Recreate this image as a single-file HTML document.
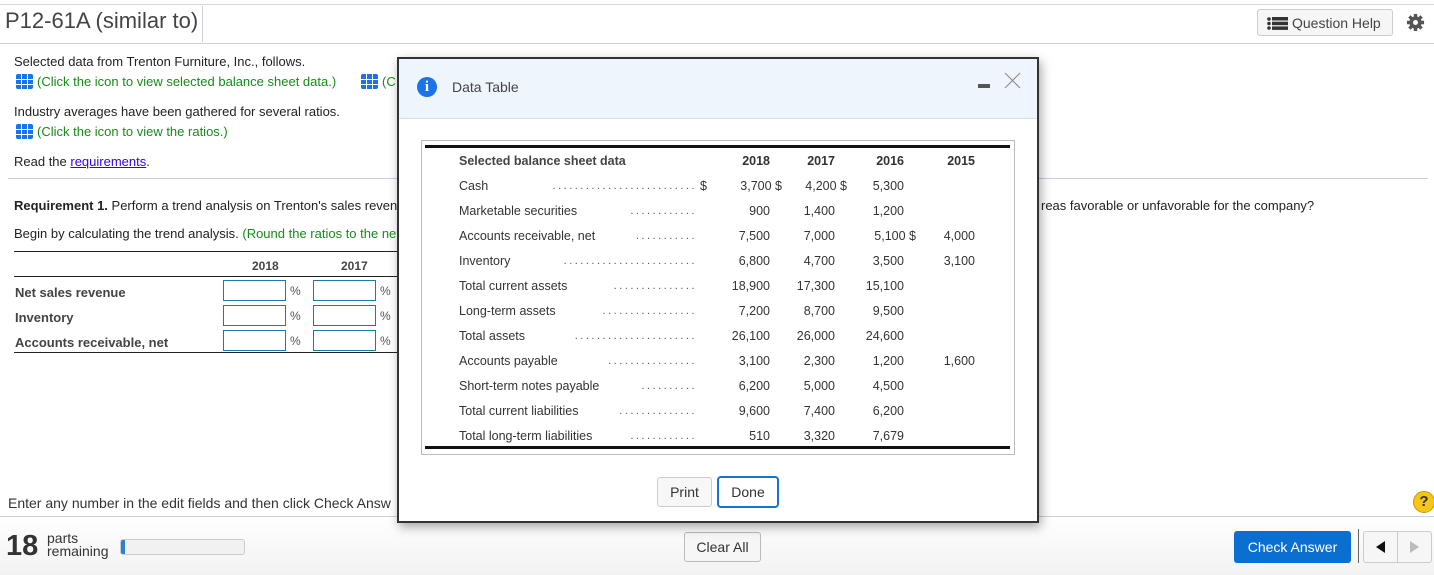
<!DOCTYPE html>
<html><head><meta charset="utf-8"><style>
*{box-sizing:border-box;margin:0;padding:0}
body{width:1434px;height:575px;position:relative;overflow:hidden;background:#fff;font-family:"Liberation Sans",Arial,sans-serif;color:#222;font-size:13px}
.a{position:absolute;white-space:nowrap}
.g{color:#1a8a1a}
.hl{position:absolute;height:1px;background:#c9d0dc}
.ic{display:inline-block;width:17px;height:15px;background:#1a73e8;vertical-align:-3px;margin-right:4px;border-radius:2px;background-image:linear-gradient(90deg,transparent 5px,#fff 5px,#fff 6px,transparent 6px,transparent 11px,#fff 11px,#fff 12px,transparent 12px),linear-gradient(0deg,transparent 4px,#fff 4px,#fff 5px,transparent 5px,transparent 9px,#fff 9px,#fff 10px,transparent 10px)}
.inp{position:absolute;width:63px;height:21px;border:1px solid #1b7aa6;background:#fff}
.pc{position:absolute;color:#555;font-size:12px}
.bl{font-weight:bold;color:#444}
.row{position:absolute;left:459px;font-size:12.5px;color:#333}
.n{position:absolute;text-align:right;font-size:12.5px;color:#333;white-space:nowrap}
.dots{position:absolute;color:#555;letter-spacing:2.5px;font-size:11px;text-align:right;overflow:hidden;white-space:nowrap;direction:rtl}
</style></head><body>
<div class="hl" style="left:0;top:4px;width:1434px;background:#d5d9e0"></div>
<div class="a" style="left:5px;top:8px;font-size:22px;color:#444">P12-61A (similar to)</div>
<div style="position:absolute;left:202px;top:6px;width:1px;height:36px;background:#c9d0dc"></div>
<div class="hl" style="left:0;top:43px;width:1434px"></div>
<div class="a" style="left:1257px;top:9px;width:136px;height:27px;border:1px solid #ccc;border-radius:3px;background:#f6f6f6;font-size:14px;color:#444;padding:5px 0 0 34px">Question Help
<svg style="position:absolute;left:9px;top:7px" width="22" height="13"><g fill="#333"><circle cx="2" cy="2" r="1.8"/><circle cx="2" cy="6.5" r="1.8"/><circle cx="2" cy="11" r="1.8"/><rect x="5" y="0" width="16" height="3.5"/><rect x="5" y="4.7" width="16" height="3.5"/><rect x="5" y="9.4" width="16" height="3.5"/></g></svg></div>
<svg style="position:absolute;left:1406px;top:13px" width="19" height="19" viewBox="0 0 20 20"><g fill="#555"><circle cx="10" cy="10" r="6.5"/><g stroke="#555" stroke-width="3.6"><line x1="10" y1="1" x2="10" y2="19"/><line x1="1" y1="10" x2="19" y2="10"/><line x1="3.6" y1="3.6" x2="16.4" y2="16.4"/><line x1="16.4" y1="3.6" x2="3.6" y2="16.4"/></g></g><circle cx="10" cy="10" r="2.6" fill="#fff"/></svg>

<div class="a" style="left:14px;top:54px">Selected data from Trenton Furniture, Inc., follows.</div>
<div class="a g" style="left:16px;top:74px"><span class="ic"></span>(Click the icon to view selected balance sheet data.)</div>
<div class="a g" style="left:361px;top:74px"><span class="ic"></span>(C</div>
<div class="a" style="left:14px;top:104px">Industry averages have been gathered for several ratios.</div>
<div class="a g" style="left:16px;top:124px"><span class="ic"></span>(Click the icon to view the ratios.)</div>
<div class="a" style="left:14px;top:154px">Read the <span style="color:#3300ee;text-decoration:underline">requirements</span>.</div>
<div class="hl" style="left:8px;top:178px;width:1420px"></div>
<div class="a" style="left:14px;top:198px"><b>Requirement 1.</b> Perform a trend analysis on Trenton's sales reven</div>
<div class="a" style="left:1041px;top:198px">reas favorable or unfavorable for the company?</div>
<div class="a" style="left:14px;top:226px">Begin by calculating the trend analysis. <span class="g">(Round the ratios to the ne</span></div>
<div style="position:absolute;left:14px;top:251px;width:385px;height:1px;background:#222"></div>
<div class="a bl" style="left:252px;top:259px;font-size:12px">2018</div>
<div class="a bl" style="left:341px;top:259px;font-size:12px">2017</div>
<div style="position:absolute;left:14px;top:276px;width:385px;height:1px;background:#222"></div>
<div class="a bl" style="left:15px;top:285px">Net sales revenue</div>
<div class="a bl" style="left:15px;top:310px">Inventory</div>
<div class="a bl" style="left:15px;top:335px">Accounts receivable, net</div>
<div class="inp" style="left:223px;top:280px"></div><div class="inp" style="left:313px;top:280px"></div>
<div class="inp" style="left:223px;top:305px"></div><div class="inp" style="left:313px;top:305px"></div>
<div class="inp" style="left:223px;top:330px"></div><div class="inp" style="left:313px;top:330px"></div>
<div class="pc" style="left:290px;top:284px">%</div><div class="pc" style="left:380px;top:284px">%</div>
<div class="pc" style="left:290px;top:309px">%</div><div class="pc" style="left:380px;top:309px">%</div>
<div class="pc" style="left:290px;top:334px">%</div><div class="pc" style="left:380px;top:334px">%</div>
<div style="position:absolute;left:14px;top:352px;width:385px;height:1px;background:#222"></div>

<div class="a" style="left:8px;top:495px;font-size:14px;color:#333">Enter any number in the edit fields and then click Check Answ</div>
<div class="hl" style="left:0;top:516px;width:1434px"></div>
<div style="position:absolute;left:0;top:517px;width:1434px;height:58px;background:linear-gradient(#fff,#f2f2f2)"></div>
<div class="a" style="left:6px;top:530px;font-size:29px;font-weight:bold;color:#333">18</div>
<div class="a" style="left:47px;top:532px;font-size:14px;color:#333;line-height:13px">parts<br>remaining</div>
<div class="a" style="left:120px;top:539px;width:125px;height:16px;border:1px solid #ccc;border-radius:3px;background:#f1f1f1;overflow:hidden"><div style="width:4px;height:100%;background:#2b7fd4"></div></div>
<div class="a" style="left:684px;top:532px;width:77px;height:30px;border:1px solid #bbb;border-radius:3px;background:#f6f6f6;font-size:14px;color:#333;text-align:center;line-height:28px">Clear All</div>
<div class="a" style="left:1234px;top:531px;width:117px;height:32px;border-radius:3px;background:#0a6fd0;color:#fff;font-size:14px;text-align:center;line-height:32px">Check Answer</div>
<div style="position:absolute;left:1358px;top:529px;width:1px;height:34px;background:#666"></div>
<div class="a" style="left:1363px;top:531px;width:69px;height:32px;border:1px solid #ccc;border-radius:3px;background:#f6f6f6"><div style="position:absolute;left:33px;top:0;width:1px;height:30px;background:#ccc"></div>
<div style="position:absolute;left:12px;top:9px;border-right:9px solid #111;border-top:6px solid transparent;border-bottom:6px solid transparent"></div>
<div style="position:absolute;left:46px;top:9px;border-left:9px solid #bbb;border-top:6px solid transparent;border-bottom:6px solid transparent"></div></div>
<div class="a" style="left:1413px;top:491px;width:22px;height:22px;border-radius:50%;background:#f5c518;border:1px solid #c99a00;text-align:center;font-weight:bold;font-size:15px;line-height:20px;color:#333">?</div>

<div style="position:absolute;left:397px;top:57px;width:642px;height:466px;border:2px solid #333;background:#fff;box-shadow:2px 4px 10px rgba(0,0,0,.35)">
<div style="height:60px;background:#eef5fd;border-bottom:1px solid #cfe0ef"></div>
</div>
<div class="a" style="left:417px;top:77px;width:20px;height:20px;border-radius:50%;background:#1a73e8;color:#fff;font-weight:bold;font-family:'Liberation Serif',serif;font-size:15px;text-align:center;line-height:20px">i</div>
<div class="a" style="left:452px;top:79px;font-size:14px;color:#444">Data Table</div>
<div style="position:absolute;left:978px;top:84px;width:12px;height:4px;background:#555"></div>
<svg style="position:absolute;left:1004px;top:72px" width="17" height="17"><path d="M1 1L16 16M16 1L1 16" stroke="#888" stroke-width="1"/></svg>
<div style="position:absolute;left:421px;top:140px;width:594px;height:315px;border:1px solid #bbb"></div>
<div style="position:absolute;left:425px;top:145px;width:585px;height:3px;background:#111"></div>
<div style="position:absolute;left:425px;top:446px;width:585px;height:3px;background:#111"></div>
<div class="row bl" style="top:154px;font-weight:bold;color:#444">Selected balance sheet data</div>
<div class="n bl" style="left:720px;width:50px;top:154px">2018</div>
<div class="n bl" style="left:785px;width:50px;top:154px">2017</div>
<div class="n bl" style="left:854px;width:50px;top:154px">2016</div>
<div class="n bl" style="left:925px;width:50px;top:154px">2015</div>

<div class="row" style="top:179px">Cash</div><div class="dots" style="left:515px;width:182px;top:180px">..........................</div><div class="n" style="left:700px;top:179px">$</div><div class="n" style="left:720px;width:62px;top:179px">3,700 $</div><div class="n" style="left:785px;width:62px;top:179px">4,200 $</div><div class="n" style="left:854px;width:50px;top:179px">5,300</div>

<div class="row" style="top:204px">Marketable securities</div><div class="dots" style="left:612px;width:85px;top:205px">............</div><div class="n" style="left:720px;width:50px;top:204px">900</div><div class="n" style="left:785px;width:50px;top:204px">1,400</div><div class="n" style="left:854px;width:50px;top:204px">1,200</div>

<div class="row" style="top:229px">Accounts receivable, net</div><div class="dots" style="left:619px;width:78px;top:230px">...........</div><div class="n" style="left:720px;width:50px;top:229px">7,500</div><div class="n" style="left:785px;width:50px;top:229px">7,000</div><div class="n" style="left:854px;width:62px;top:229px">5,100 $</div><div class="n" style="left:925px;width:50px;top:229px">4,000</div>

<div class="row" style="top:254px">Inventory</div><div class="dots" style="left:530px;width:167px;top:255px">........................</div><div class="n" style="left:720px;width:50px;top:254px">6,800</div><div class="n" style="left:785px;width:50px;top:254px">4,700</div><div class="n" style="left:854px;width:50px;top:254px">3,500</div><div class="n" style="left:925px;width:50px;top:254px">3,100</div>

<div class="row" style="top:279px">Total current assets</div><div class="dots" style="left:590px;width:107px;top:280px">...............</div><div class="n" style="left:720px;width:50px;top:279px">18,900</div><div class="n" style="left:785px;width:50px;top:279px">17,300</div><div class="n" style="left:854px;width:50px;top:279px">15,100</div>

<div class="row" style="top:304px">Long-term assets</div><div class="dots" style="left:575px;width:122px;top:305px">.................</div><div class="n" style="left:720px;width:50px;top:304px">7,200</div><div class="n" style="left:785px;width:50px;top:304px">8,700</div><div class="n" style="left:854px;width:50px;top:304px">9,500</div>

<div class="row" style="top:329px">Total assets</div><div class="dots" style="left:545px;width:152px;top:330px">......................</div><div class="n" style="left:720px;width:50px;top:329px">26,100</div><div class="n" style="left:785px;width:50px;top:329px">26,000</div><div class="n" style="left:854px;width:50px;top:329px">24,600</div>

<div class="row" style="top:354px">Accounts payable</div><div class="dots" style="left:582px;width:115px;top:355px">................</div><div class="n" style="left:720px;width:50px;top:354px">3,100</div><div class="n" style="left:785px;width:50px;top:354px">2,300</div><div class="n" style="left:854px;width:50px;top:354px">1,200</div><div class="n" style="left:925px;width:50px;top:354px">1,600</div>

<div class="row" style="top:379px">Short-term notes payable</div><div class="dots" style="left:627px;width:70px;top:380px">..........</div><div class="n" style="left:720px;width:50px;top:379px">6,200</div><div class="n" style="left:785px;width:50px;top:379px">5,000</div><div class="n" style="left:854px;width:50px;top:379px">4,500</div>

<div class="row" style="top:404px">Total current liabilities</div><div class="dots" style="left:597px;width:100px;top:405px">..............</div><div class="n" style="left:720px;width:50px;top:404px">9,600</div><div class="n" style="left:785px;width:50px;top:404px">7,400</div><div class="n" style="left:854px;width:50px;top:404px">6,200</div>

<div class="row" style="top:429px">Total long-term liabilities</div><div class="dots" style="left:612px;width:85px;top:430px">............</div><div class="n" style="left:720px;width:50px;top:429px">510</div><div class="n" style="left:785px;width:50px;top:429px">3,320</div><div class="n" style="left:854px;width:50px;top:429px">7,679</div>

<div class="a" style="left:657px;top:477px;width:55px;height:30px;border:1px solid #ccc;border-radius:3px;background:#f7f7f7;text-align:center;line-height:28px;font-size:14px;color:#333">Print</div>
<div class="a" style="left:717px;top:476px;width:62px;height:32px;border:2px solid #1a73d0;border-radius:4px;background:#fff;text-align:center;line-height:28px;font-size:14px;color:#333">Done</div>
</body></html>
